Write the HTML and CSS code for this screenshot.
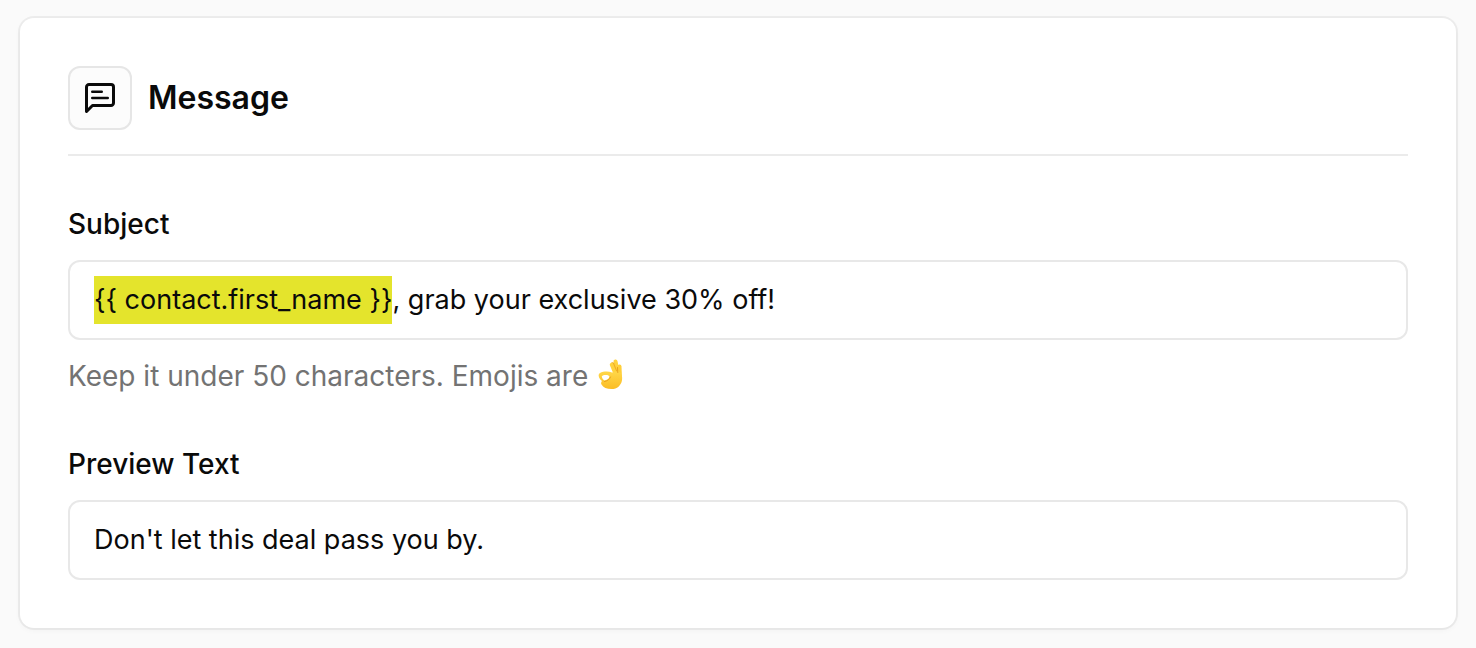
FILE: index.html
```html
<!DOCTYPE html>
<html lang="en">
<head>
    <meta charset="UTF-8">
    <meta name="viewport" content="width=device-width, initial-scale=1.0">
    <title>Message</title>
    <link rel="stylesheet" href="styles.css">
</head>
<body>
    <main class="card">
        <header class="card-header">
            <span class="icon-box">
                <svg width="32" height="32" viewBox="0 0 32 32" fill="none" stroke="currentColor" stroke-linecap="round" stroke-linejoin="round" aria-hidden="true">
                    <path stroke-width="3" d="M2.500 29.500V5A2.500 2.500 0 0 1 5 2.500h22A2.500 2.500 0 0 1 29.500 5v16a2.500 2.500 0 0 1-2.500 2.500H8.500z"/>
                    <path stroke-width="2.500" d="M8.250 9.700h9.500M8.250 16h15.500"/>
                </svg>
            </span>
            <h1>Message</h1>
        </header>

        <form class="form">
            <div class="form-group">
                <label for="subject">Subject</label>
                <div class="field">
                    <mark class="token">{{ contact.first_name }}</mark>
                    <input type="text" id="subject" value=", grab your exclusive 30% off!" aria-describedby="subject-help">
                </div>
                <p id="subject-help" class="help">
                    Keep it under 50 characters. Emojis are
                    <svg class="emoji" width="26" height="32" viewBox="0 0 26 32" role="img" aria-label="OK hand">
                        <defs>
                            <linearGradient id="skin" x1="0" y1="0" x2="0" y2="1">
                                <stop offset="0" stop-color="#ffd84a"/>
                                <stop offset="1" stop-color="#fbbd25"/>
                            </linearGradient>
                        </defs>
                        <!-- raised fingers -->
                        <g fill="none" stroke-linecap="round">
                            <path stroke="#ffd23e" stroke-width="4" d="M17.500 3.500l2.500 12"/>
                            <path stroke="#f0ac22" stroke-width="3.500" d="M14.500 6l3.500 9"/>
                            <path stroke="#ffd23e" stroke-width="3.500" d="M13.500 6.500l3.500 8.500"/>
                            <path stroke="#ffcf3a" stroke-width="4" d="M21.500 8.500l.5 11"/>
                        </g>
                        <!-- palm with the thumb and index ring -->
                        <path fill="url(#skin)" fill-rule="evenodd" d="M2 15c3.500-1.700 8.500-1.800 12-.5l6-1.500c3.500 2 4.700 5.500 4 9.200-.9 5.300-5 8.800-10.300 8.800-5 0-8.500-1.500-10.200-4.500C2.500 25 3.500 23.500 4 23c-1.700-1.200-3-3-3.300-5C.5 16.600 1 15.500 2 15zM3.800 18.300c.1 1.900 1.200 3.300 2.700 4.200 2.300-.3 4.300-1.700 5-3.700-.5-1.500-2-1.800-4-1.800-1.500 0-2.900.4-3.700 1.300z"/>
                        <path fill="none" stroke="#e9a01c" stroke-width="1" stroke-linecap="round" d="M19.500 9.500l.3 5M12.500 19c-1 2.500-3 4-6 4.500"/>
                    </svg>
                </p>
            </div>

            <div class="form-group">
                <label for="preview">Preview Text</label>
                <div class="field">
                    <input type="text" id="preview" value="Don't let this deal pass you by.">
                </div>
            </div>
        </form>
    </main>
</body>
</html>
```
FILE: styles.css
```css
* {
    box-sizing: border-box;
    margin: 0;
    padding: 0;
}

body {
    background-color: #fafafa;
    color: #0a0a0a;
    font-family: Inter, "Liberation Sans", sans-serif;
    font-size: 28px;
    line-height: 40px;
    padding: 18px 20px;
}

.card {
    background-color: #fff;
    border-radius: 14px;
    box-shadow: 0 0 0 2px rgba(0, 0, 0, 0.05), 0 2px 6px rgba(0, 0, 0, 0.04);
    padding: 48px;
}

.card-header {
    display: flex;
    align-items: center;
    gap: 16px;
    padding-bottom: 24px;
    border-bottom: 2px solid #ebebeb;
}

.icon-box {
    display: flex;
    align-items: center;
    justify-content: center;
    width: 64px;
    height: 64px;
    border: 2px solid #e6e6e6;
    border-radius: 12px;
    background-color: #fcfcfc;
}

h1 {
    font-size: 32px;
    font-weight: 600;
}

.form {
    display: flex;
    flex-direction: column;
    gap: 48px;
    padding-top: 48px;
}

.form-group {
    display: flex;
    flex-direction: column;
    gap: 16px;
}

label {
    font-weight: 500;
}

.field {
    display: flex;
    align-items: center;
    height: 80px;
    padding: 0 24px;
    border: 2px solid #e8e8e8;
    border-radius: 12px;
    background-color: #fff;
    font-size: 27px;
    line-height: 48px;
}

.field:focus-within {
    border-color: #a3a3a3;
}

.token {
    background-color: #e4e42c;
    color: inherit;
    white-space: nowrap;
}

input {
    flex: 1;
    min-width: 0;
    height: 48px;
    border: none;
    outline: none;
    background: transparent;
    color: inherit;
    font: inherit;
}

.help {
    color: #737373;
}

.emoji {
    margin-left: 2px;
    vertical-align: -4px;
}
```
